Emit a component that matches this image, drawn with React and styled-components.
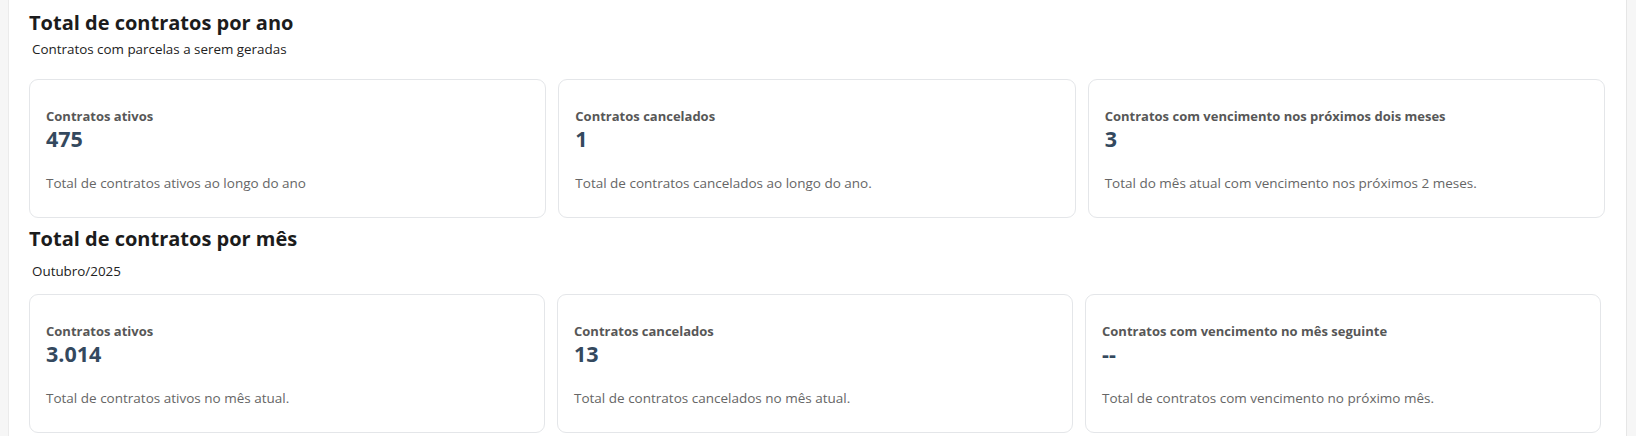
import React from 'react'
import styled, { createGlobalStyle } from 'styled-components'

const GlobalStyle = createGlobalStyle`
    body {
        margin: 0;
        background: #ffffff;
        font-family: "Open Sans", "Noto Sans", Arial, sans-serif;
    }
`;

const Page = styled.div`
    background: #f6f6f6;
    padding: 0 9px 0 8px;
`;

const Panel = styled.main`
    background: #ffffff;
    border-left: 1px solid #ebebeb;
    border-right: 1px solid #e6e6e6;
    padding: 9px 21px 3px 20px;
`;

const SectionTitle = styled.h2`
    margin: ${props => props.$first ? '0' : '7px'} 0 0;
    font-size: 20px;
    line-height: 28px;
    font-weight: 700;
    color: #1c1c1c;
`;

const SectionSubtitle = styled.p`
    margin: ${props => props.$spaced ? '9px' : '3px'} 0 0 3px;
    font-size: 13.4px;
    line-height: 18px;
    color: #222222;
`;

const CardGrid = styled.div`
    display: grid;
    grid-template-columns: repeat(3, 1fr);
    gap: 12px;
    margin-top: ${props => props.$top}px;
    padding-right: ${props => props.$inset || 0}px;
`;

const Card = styled.div`
    box-sizing: border-box;
    height: 139px;
    border: 1px solid #e4e6e9;
    border-radius: 9px;
    padding: 27px 16px 25px;
    display: flex;
    flex-direction: column;
`;

const CardLabel = styled.span`
    font-size: 13px;
    line-height: 18px;
    font-weight: 700;
    color: #575757;
`;

const CardValue = styled.span`
    margin-top: 1px;
    font-size: 21.5px;
    line-height: 26px;
    font-weight: 700;
    color: #34495e;
`;

const CardDesc = styled.span`
    margin-top: 22px;
    font-size: 13.5px;
    line-height: 18px;
    color: #666666;
`;

const yearCards = [
    { label: 'Contratos ativos', value: '475', desc: 'Total de contratos ativos ao longo do ano' },
    { label: 'Contratos cancelados', value: '1', desc: 'Total de contratos cancelados ao longo do ano.' },
    { label: 'Contratos com vencimento nos próximos dois meses', value: '3', desc: 'Total do mês atual com vencimento nos próximos 2 meses.' },
];

const monthCards = [
    { label: 'Contratos ativos', value: '3.014', desc: 'Total de contratos ativos no mês atual.' },
    { label: 'Contratos cancelados', value: '13', desc: 'Total de contratos cancelados no mês atual.' },
    { label: 'Contratos com vencimento no mês seguinte', value: '--', desc: 'Total de contratos com vencimento no próximo mês.' },
];

const StatCard = ({ label, value, desc }) => (
    <Card>
        <CardLabel>{label}</CardLabel>
        <CardValue>{value}</CardValue>
        <CardDesc>{desc}</CardDesc>
    </Card>
);

const App = () => {
    return (
        <>
            <GlobalStyle />
            <Page>
                <Panel>
                    <section>
                        <SectionTitle $first>Total de contratos por ano</SectionTitle>
                        <SectionSubtitle>Contratos com parcelas a serem geradas</SectionSubtitle>
                        <CardGrid $top={21}>
                            {yearCards.map(card => <StatCard key={card.label} {...card} />)}
                        </CardGrid>
                    </section>
                    <section>
                        <SectionTitle>Total de contratos por mês</SectionTitle>
                        <SectionSubtitle $spaced>Outubro/2025</SectionSubtitle>
                        <CardGrid $top={14} $inset={4}>
                            {monthCards.map(card => <StatCard key={card.label} {...card} />)}
                        </CardGrid>
                    </section>
                </Panel>
            </Page>
        </>
    )
}

export default App
